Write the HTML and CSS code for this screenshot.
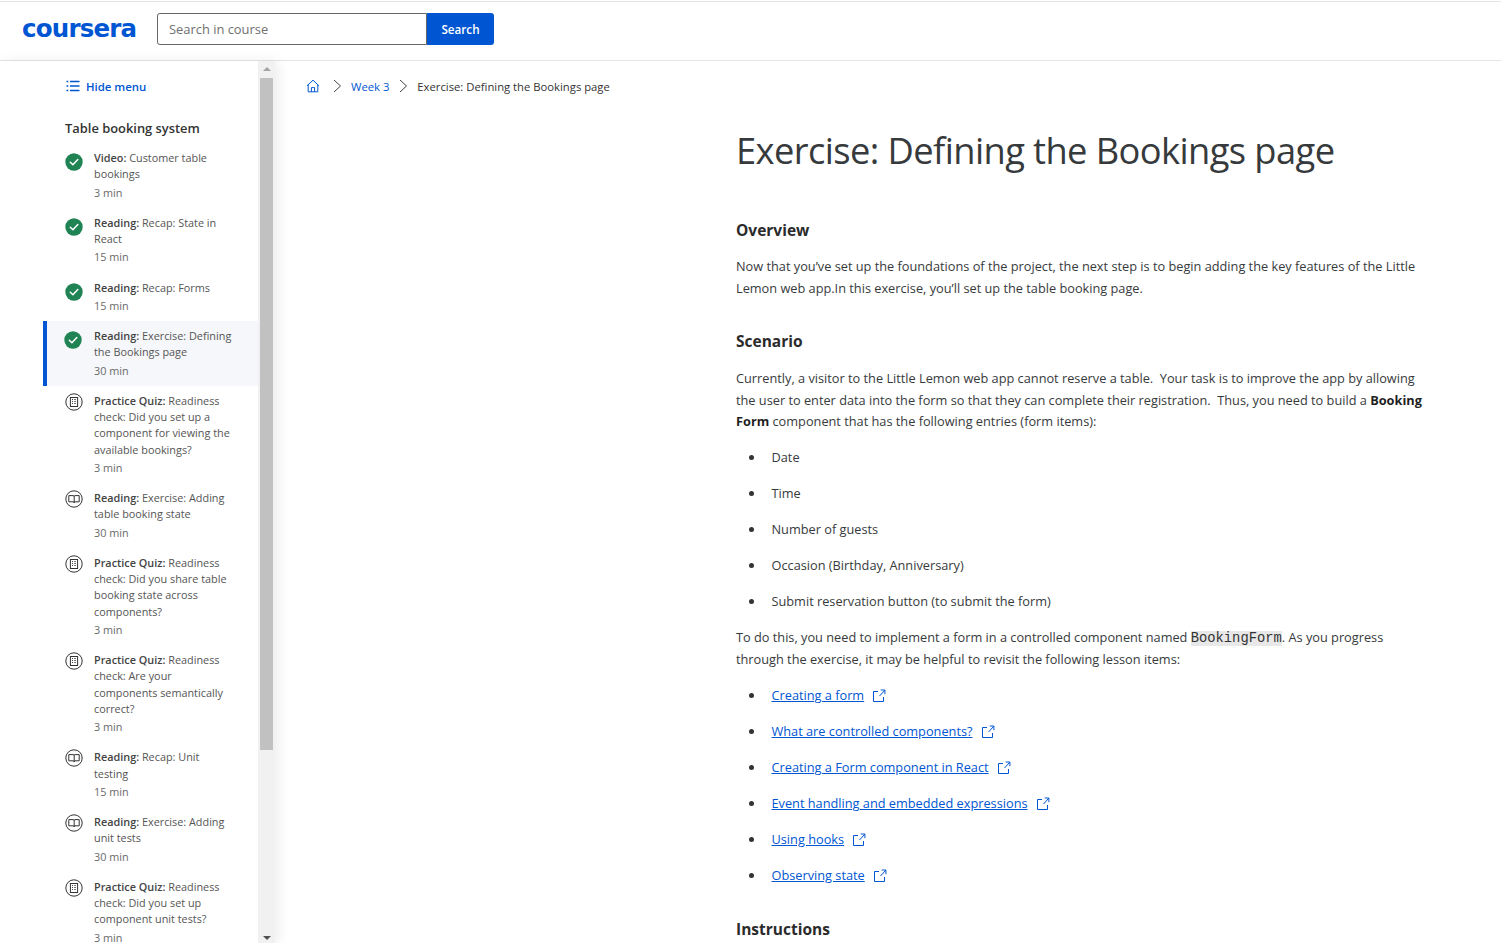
FILE: index.html
```html
<!DOCTYPE html>
<html lang="en">
<head>
<meta charset="utf-8">
<title>Exercise: Defining the Bookings page</title>
<link rel="stylesheet" href="styles.css">
</head>
<body>
<svg class="defs" width="0" height="0" aria-hidden="true">
  <defs>
    <symbol id="done" viewBox="0 0 18 18"><circle cx="9" cy="9" r="8.7" fill="#1f8354"/><path d="M5.3 9.2l2.6 2.6 4.9-5.2" fill="none" stroke="#fff" stroke-width="1.5" stroke-linecap="round" stroke-linejoin="round"/></symbol>
    <symbol id="quiz" viewBox="0 0 18 18"><circle cx="9" cy="9" r="8.2" fill="none" stroke="#333" stroke-width="1"/><rect x="5.4" y="4.5" width="7.2" height="9" fill="none" stroke="#333" stroke-width="1"/><path d="M7 6.5h1M7 8.5h1M7 10.5h1M9.3 6.5h1.5M9.3 8.5h1.5M9.3 10.5h1.5" stroke="#333" stroke-width=".9"/></symbol>
    <symbol id="read" viewBox="0 0 18 18"><circle cx="9" cy="9" r="8.2" fill="none" stroke="#333" stroke-width="1"/><path d="M3.8 5.6h4.4q1 0 1 1v6.2q0-1-1-1H3.8zM14.2 5.6H9.9q-.7 0-.7 1M14.2 5.6v6.2H9.9q-.7 0-.7 1" fill="none" stroke="#333" stroke-width="1"/></symbol>
    <symbol id="ext" viewBox="0 0 14 14"><path d="M6 2.5H1.5v10h10V8M7.5 7L12.7 1.3M8.7 1h4.2v4.2" fill="none" stroke="#0056d2" stroke-width="1"/></symbol>
  </defs>
</svg>

<header class="topbar">
  <span class="logo">coursera</span>
  <form class="search">
    <input class="search-input" type="text" placeholder="Search in course">
    <button class="search-btn" type="button">Search</button>
  </form>
</header>

<div class="shell">
  <aside class="sidebar">
    <nav class="menu">
      <a class="hide-menu">
        <svg class="hide-icon" viewBox="0 0 14 12"><path d="M.5 1.5h1.8M.5 6h1.8M.5 10.5h1.8M4 1.5h9.5M4 6h9.5M4 10.5h9.5" fill="none" stroke="#0056d2" stroke-width="1.3"/></svg>
        Hide menu
      </a>
      <h2 class="module">Table booking system</h2>
      <ul class="items">
        <li class="item"><svg class="ico ico-done"><use href="#done"/></svg><div><p class="t"><b>Video:</b> Customer table<br>bookings</p><p class="m">3 min</p></div></li>
        <li class="item"><svg class="ico ico-done"><use href="#done"/></svg><div><p class="t"><b>Reading:</b> Recap: State in<br>React</p><p class="m">15 min</p></div></li>
        <li class="item"><svg class="ico ico-done"><use href="#done"/></svg><div><p class="t"><b>Reading:</b> Recap: Forms</p><p class="m">15 min</p></div></li>
        <li class="item active"><svg class="ico ico-done"><use href="#done"/></svg><div><p class="t"><b>Reading:</b> Exercise: Defining<br>the Bookings page</p><p class="m">30 min</p></div></li>
        <li class="item"><svg class="ico"><use href="#quiz"/></svg><div><p class="t"><b>Practice Quiz:</b> Readiness<br>check: Did you set up a<br>component for viewing the<br>available bookings?</p><p class="m">3 min</p></div></li>
        <li class="item"><svg class="ico"><use href="#read"/></svg><div><p class="t"><b>Reading:</b> Exercise: Adding<br>table booking state</p><p class="m">30 min</p></div></li>
        <li class="item"><svg class="ico"><use href="#quiz"/></svg><div><p class="t"><b>Practice Quiz:</b> Readiness<br>check: Did you share table<br>booking state across<br>components?</p><p class="m">3 min</p></div></li>
        <li class="item"><svg class="ico"><use href="#quiz"/></svg><div><p class="t"><b>Practice Quiz:</b> Readiness<br>check: Are your<br>components semantically<br>correct?</p><p class="m">3 min</p></div></li>
        <li class="item"><svg class="ico"><use href="#read"/></svg><div><p class="t"><b>Reading:</b> Recap: Unit<br>testing</p><p class="m">15 min</p></div></li>
        <li class="item"><svg class="ico"><use href="#read"/></svg><div><p class="t"><b>Reading:</b> Exercise: Adding<br>unit tests</p><p class="m">30 min</p></div></li>
        <li class="item"><svg class="ico"><use href="#quiz"/></svg><div><p class="t"><b>Practice Quiz:</b> Readiness<br>check: Did you set up<br>component unit tests?</p><p class="m">3 min</p></div></li>
      </ul>
    </nav>
    <div class="scrollbar">
      <span class="arrow up"></span>
      <span class="thumb"></span>
      <span class="arrow down"></span>
    </div>
  </aside>

  <main class="content">
    <div class="crumbs">
      <svg class="home" viewBox="0 0 14 14"><path d="M1 6.8L7 1.2l6 5.6M2.2 5.8v7h9.6v-7M5.4 12.8V8.6h3.2v4.2" fill="none" stroke="#0056d2" stroke-width="1"/></svg>
      <svg class="chev" viewBox="0 0 10 14"><path d="M2 1l6.5 6L2 13" fill="none" stroke="#444" stroke-width="1"/></svg>
      <a class="crumb-link">Week 3</a>
      <svg class="chev" viewBox="0 0 10 14"><path d="M2 1l6.5 6L2 13" fill="none" stroke="#444" stroke-width="1"/></svg>
      <span class="crumb-here">Exercise: Defining the Bookings page</span>
    </div>
    <article class="article">
      <h1 class="title">Exercise: Defining the Bookings page</h1>
      <h2 class="h-overview">Overview</h2>
      <p class="para">Now that you’ve set up the foundations of the project, the next step is to begin adding the key features of the Little<br>Lemon web app.In this exercise, you’ll set up the table booking page.</p>
      <h2 class="h-scenario">Scenario</h2>
      <p class="para">Currently, a visitor to the Little Lemon web app cannot reserve a table.&nbsp; Your task is to improve the app by allowing<br>the user to enter data into the form so that they can complete their registration.&nbsp; Thus, you need to build a <b>Booking<br>Form</b> component that has the following entries (form items):</p>
      <ul class="list">
        <li>Date</li>
        <li>Time</li>
        <li>Number of guests</li>
        <li>Occasion (Birthday, Anniversary)</li>
        <li>Submit reservation button (to submit the form)</li>
      </ul>
      <p class="para">To do this, you need to implement a form in a controlled component named <code class="code">BookingForm</code>. As you progress<br>through the exercise, it may be helpful to revisit the following lesson items:</p>
      <ul class="list links">
        <li><a>Creating a form</a><svg class="ext"><use href="#ext"/></svg></li>
        <li><a>What are controlled components?</a><svg class="ext"><use href="#ext"/></svg></li>
        <li><a>Creating a Form component in React</a><svg class="ext"><use href="#ext"/></svg></li>
        <li><a>Event handling and embedded expressions</a><svg class="ext"><use href="#ext"/></svg></li>
        <li><a>Using hooks</a><svg class="ext"><use href="#ext"/></svg></li>
        <li><a>Observing state</a><svg class="ext"><use href="#ext"/></svg></li>
      </ul>
      <h2 class="h-instructions">Instructions</h2>
    </article>
  </main>
</div>
</body>
</html>
```
FILE: styles.css
```css
* { box-sizing: border-box; }
html, body { height: 100%; }
body {
  margin: 0;
  height: 943px;
  overflow: hidden;
  background: #fff;
  color: #373a3c;
  font-family: "Open Sans", "Noto Sans", sans-serif;
  display: flex;
  flex-direction: column;
}
.defs { position: absolute; }
p, h1, h2, ul { margin: 0; padding: 0; }

/* top bar */
.topbar {
  height: 60px;
  flex: none;
  margin-top: 1px;
  border-top: 1px solid #e5e5e5;
  border-bottom: 1px solid #e5e5e5;
  display: flex;
  align-items: center;
  padding: 0 0 4px 22px;
}
.logo {
  width: 135px;
  font-family: "DejaVu Sans", sans-serif;
  font-weight: 700;
  font-size: 24.5px;
  letter-spacing: -.8px;
  color: #0056d2;
  line-height: 1;
  padding-top: 1px;
}
.search { display: flex; height: 32px; }
.search-input {
  width: 270px;
  height: 32px;
  border: 1px solid #666;
  border-radius: 3px 0 0 3px;
  padding: 0 11px;
  font: 12.9px "Open Sans", sans-serif;
  color: #333;
  outline: 0;
}
.search-input::placeholder { color: #6f6f6f; opacity: 1; }
.search-btn {
  width: 67px;
  height: 32px;
  border: 0;
  border-radius: 0 3px 3px 0;
  background: #0056d2;
  color: #fff;
  font: 600 11.7px "Open Sans", sans-serif;
}

/* shell */
.shell { flex: 1; min-height: 0; display: flex; }
.sidebar {
  width: 275px;
  flex: none;
  display: flex;
  overflow: hidden;
  position: relative;
  z-index: 1;
  box-shadow: 4px 0 12px rgba(0, 0, 0, .07);
}
.menu { width: 258px; flex: none; padding: 17px 0 0 43px; }
.hide-menu {
  display: flex;
  align-items: center;
  gap: 6px;
  height: 16px;
  padding-left: 23px;
  color: #0056d2;
  font-size: 11.4px;
  font-weight: 600;
}
.hide-icon { width: 14px; height: 12px; }
.module {
  padding: 26px 0 0 22px;
  height: 48.5px;
  font-size: 12.9px;
  font-weight: 600;
  color: #333;
  line-height: 16px;
}
.items { list-style: none; }
.item {
  display: flex;
  gap: 11px;
  padding: 7.5px 0 6.5px 22px;
  font-size: 10.85px;
  line-height: 16.25px;
  color: #555;
}
.item.active {
  background: #f5f7fa;
  border-left: 4px solid #0056d2;
  padding-left: 17px;
  padding-bottom: 7.25px;
  margin-bottom: -.75px;
  gap: 12px;
}
.item b { font-weight: 600; color: #444; }
.ico { width: 18px; height: 18px; flex: none; }
.ico-done { margin-top: 3px; }
.t { white-space: nowrap; }
.m { color: #6a6a6a; margin-top: 2px; }

/* scrollbar */
.scrollbar {
  width: 17px;
  flex: none;
  background: #f1f1f1;
  display: flex;
  flex-direction: column;
  align-items: center;
}
.thumb { width: 13px; height: 672px; background: #c1c1c1; margin: 7px 0 auto; }
.arrow { width: 0; height: 0; border-left: 4px solid transparent; border-right: 4px solid transparent; }
.arrow.up { border-bottom: 4px solid #a3a3a3; margin-top: 6px; }
.arrow.down { border-top: 4px solid #505050; margin-bottom: 3px; }

/* content */
.content { flex: 1; min-width: 0; padding: 17px 0 0 31px; overflow: hidden; }
.crumbs {
  display: flex;
  align-items: center;
  height: 16px;
  font-size: 11.27px;
  color: #333;
}
.home { width: 14px; height: 14px; margin-right: 12px; }
.chev { width: 10px; height: 14px; margin-right: 9px; }
.crumb-link { color: #0056d2; margin-right: 9px; }
.article { margin-left: 430px; width: 720px; padding-top: 32px; }
.title {
  font-size: 36.3px;
  font-weight: 400;
  line-height: 48px;
  letter-spacing: -.6px;
  color: #373a3c;
  white-space: nowrap;
}
.h-overview, .h-scenario, .h-instructions {
  font-size: 15.5px;
  font-weight: 700;
  line-height: 22px;
  color: #2b2b2b;
}
.h-overview { margin-top: 45px; margin-bottom: 15px; }
.h-scenario { margin-top: 31px; margin-bottom: 16px; }
.h-instructions { margin-top: 31px; }
.para {
  font-size: 12.76px;
  line-height: 21.6px;
  white-space: nowrap;
}
.para b { font-weight: 700; color: #1f1f1f; }
.list {
  list-style: none;
  padding-left: 35.5px;
  margin: 14px 0;
  font-size: 12.76px;
  line-height: 21.6px;
}
.list li { margin-bottom: 14.4px; position: relative; }
.list li::before {
  content: "";
  position: absolute;
  left: -23px;
  top: 8px;
  width: 5px;
  height: 5px;
  border-radius: 50%;
  background: #333;
}
.links a { color: #0056d2; text-decoration: underline; }
.ext { width: 14px; height: 14px; margin-left: 8px; vertical-align: -3px; }
.code {
  font-family: "Liberation Mono", monospace;
  font-size: 13.8px;
  background: #e8e8e8;
  color: #333;
}
```
